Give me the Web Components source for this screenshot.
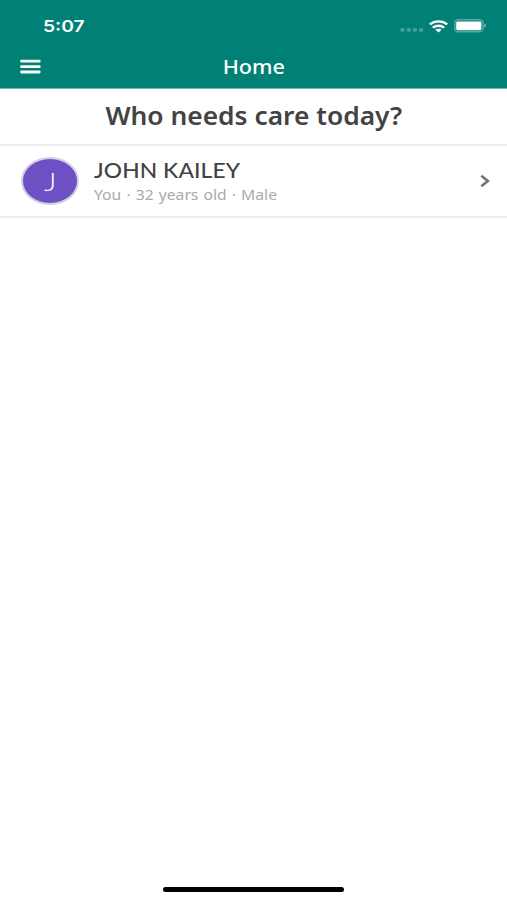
<!DOCTYPE html>
<html lang="en">
<head>
<meta charset="utf-8">
<meta name="viewport" content="width=device-width, initial-scale=1">
<title>Home</title>
<style>
  body {
    margin: 0;
    background: #fff;
    font-family: "Noto Sans", sans-serif;
  }
</style>
</head>
<body>
<care-app>
  <status-bar slot="header" time="5:07"></status-bar>
  <nav-bar slot="header">Home</nav-bar>
  <page-title>Who needs care today?</page-title>
  <patient-row initial="J">
    <wide-text slot="name" style="--stretch: 1.11">JOHN KAILEY</wide-text>
    <wide-text slot="details" style="--stretch: 1.045; word-spacing: 1px">You · 32 years old · Male</wide-text>
  </patient-row>
</care-app>

<script>
// text drawn wider than its font, --stretch is the horizontal factor
customElements.define(
  "wide-text",
  class extends HTMLElement {
    constructor() {
      super();
      this.attachShadow({ mode: "open" });
      this.shadowRoot.innerHTML = `
        <style>
          :host {
            display: inline-block;
            white-space: nowrap;
            transform: scaleX(var(--stretch, 1));
            transform-origin: var(--origin, left) center;
          }
        </style>
        <slot></slot>
      `;
    }
  }
);

customElements.define(
  "care-app",
  class extends HTMLElement {
    constructor() {
      super();
      this.attachShadow({ mode: "open" });
      this.shadowRoot.innerHTML = `
        <style>
          :host {
            display: flex;
            flex-direction: column;
            height: 900px;
            overflow: hidden;
          }

          header {
            height: 88px;
            color: #fff;
            background: #018175;
            border-bottom: 1px solid #78b9b2;
          }

          main {
            flex: 1;
          }

          footer {
            display: flex;
            justify-content: center;
            padding-bottom: 8px;
          }

          .home-indicator {
            width: 181px;
            height: 5px;
            border-radius: 3px;
            background: #000;
          }
        </style>
        <header><slot name="header"></slot></header>
        <main><slot></slot></main>
        <footer><div class="home-indicator"></div></footer>
      `;
    }
  }
);

customElements.define(
  "status-bar",
  class extends HTMLElement {
    constructor() {
      super();
      this.attachShadow({ mode: "open" });
      this.shadowRoot.innerHTML = `
        <style>
          :host {
            display: flex;
            align-items: center;
            justify-content: space-between;
            height: 44px;
            padding: 8px 20px 0 43px;
            box-sizing: border-box;
          }

          wide-text {
            font: 600 16px/20px Inter, sans-serif;
            --stretch: 1.2;
          }

          .icons {
            display: flex;
            align-items: center;
          }

          svg {
            display: block;
          }

          .wifi {
            margin: 0 6px 0 5px;
          }
        </style>
        <wide-text>${this.getAttribute("time")}</wide-text>
        <div class="icons">
          <svg width="24" height="12" viewBox="0 0 24 12" fill="#fff" fill-opacity=".27">
            <rect x="0.5" y="8" width="4" height="3.8" rx="1.4"/>
            <rect x="6.7" y="8" width="4" height="3.8" rx="1.4"/>
            <rect x="12.9" y="8" width="4" height="3.8" rx="1.4"/>
            <rect x="19.1" y="8" width="4" height="3.8" rx="1.4"/>
          </svg>
          <svg class="wifi" width="19" height="13" viewBox="0 0 19 13" fill="none" stroke="#fff" stroke-width="2.4">
            <path d="M.8 4.4C5.6 .3 13.4 .3 18.2 4.4"/>
            <path d="M3.8 7.7C7 5 12 5 15.2 7.7"/>
            <path d="M6.4 9.8C8.2 8.3 10.8 8.3 12.6 9.8L9.5 12.6Z" fill="#fff" stroke="none"/>
          </svg>
          <svg width="33" height="14" viewBox="0 0 33 14">
            <rect x=".8" y=".8" width="28.2" height="12" rx="3.4" fill="none" stroke="#fff" stroke-opacity=".33" stroke-width="1.5"/>
            <rect x="2.2" y="2.4" width="25.2" height="8.8" rx="1.4" fill="#fff"/>
            <path d="M30.4 4.6C32.6 5.4 32.6 8.2 30.4 9Z" fill="#fff" fill-opacity=".45"/>
          </svg>
        </div>
      `;
    }
  }
);

customElements.define(
  "nav-bar",
  class extends HTMLElement {
    constructor() {
      super();
      this.attachShadow({ mode: "open" });
      this.shadowRoot.innerHTML = `
        <style>
          :host {
            display: grid;
            grid-template-columns: 1fr auto 1fr;
            align-items: center;
            height: 44px;
            padding: 1px 20px 0;
            box-sizing: border-box;
          }

          button {
            display: flex;
            width: 21px;
            padding: 0;
            border: 0;
            background: none;
          }

          wide-text {
            font-size: 20px;
            font-weight: 500;
            line-height: 27px;
            --stretch: 1.08;
            --origin: center;
          }
        </style>
        <button aria-label="Menu">
          <svg width="21" height="15" viewBox="0 0 21 15" fill="#fff">
            <rect x=".3" y=".8" width="20.2" height="2.8" rx=".8"/>
            <rect x=".3" y="6.2" width="20.2" height="2.8" rx=".8"/>
            <rect x=".3" y="11.6" width="20.2" height="2.8" rx=".8"/>
          </svg>
        </button>
        <wide-text><slot></slot></wide-text>
      `;
    }
  }
);

customElements.define(
  "page-title",
  class extends HTMLElement {
    constructor() {
      super();
      this.attachShadow({ mode: "open" });
      this.shadowRoot.innerHTML = `
        <style>
          :host {
            display: flex;
            align-items: center;
            justify-content: center;
            height: 57px;
            padding-bottom: 3px;
            box-sizing: border-box;
            border-bottom: 2px solid #ececec;
            color: #434343;
          }

          wide-text {
            font-size: 25px;
            font-weight: 600;
            line-height: 34px;
            --stretch: 1.054;
            --origin: center;
          }
        </style>
        <wide-text><slot></slot></wide-text>
      `;
    }
  }
);

customElements.define(
  "patient-row",
  class extends HTMLElement {
    constructor() {
      super();
      this.attachShadow({ mode: "open" });
      this.shadowRoot.innerHTML = `
        <style>
          :host {
            display: flex;
            align-items: center;
            height: 70px;
            padding: 0 17px 0 21px;
            border-bottom: 2px solid #ececec;
          }

          .avatar {
            display: flex;
            align-items: center;
            justify-content: center;
            width: 54px;
            height: 44px;
            border: 2px solid #d3cfe2;
            border-radius: 50%;
            background: #6c50c4;
            color: #fff;
            font-family: Lato, sans-serif;
            font-size: 25px;
            font-weight: 300;
            --stretch: 1.2;
            --origin: center;
          }

          .text {
            display: flex;
            flex: 1;
            flex-direction: column;
            align-items: flex-start;
            margin-left: 15px;
          }

          .name {
            color: #434343;
            font-family: Lato, sans-serif;
            font-size: 20.5px;
            font-weight: 500;
            line-height: 24px;
            padding-bottom: 2px;
            letter-spacing: .1px;
          }

          .details {
            color: #a9a9a9;
            font-size: 15px;
            line-height: 20px;
          }
        </style>
        <div class="avatar"><wide-text>${this.getAttribute("initial")}</wide-text></div>
        <div class="text">
          <div class="name"><slot name="name"></slot></div>
          <div class="details"><slot name="details"></slot></div>
        </div>
        <svg width="10" height="14" viewBox="0 0 10 14" fill="none" stroke="#737373" stroke-width="2.7">
          <path d="M1.3 1.8L7.8 7L1.3 12.2"/>
        </svg>
      `;
    }
  }
);
</script>
</body>
</html>
